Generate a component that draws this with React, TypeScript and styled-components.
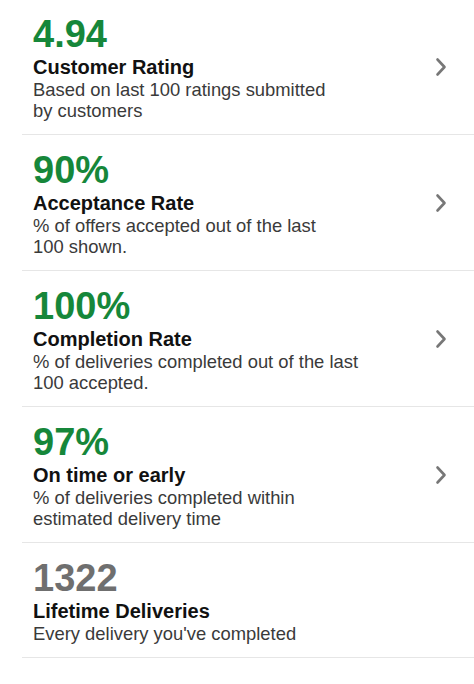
import { FC } from 'react';
import styled, { createGlobalStyle } from 'styled-components';

const GlobalStyle = createGlobalStyle`
  body {
    margin: 0;
    background: #ffffff;
    font-family: 'Liberation Sans', Arial, sans-serif;
  }
`;

const List = styled.div`
  padding-left: 22px;
`;

const Item = styled.div`
  display: flex;
  flex-direction: column;
  padding: 16px 27px 13px 11px;
  border-bottom: 1px solid #e6e6e6;

  &:first-child {
    padding-top: 15px;
  }
`;

const Value = styled.div<{ $muted?: boolean }>`
  font-size: 38px;
  font-weight: 700;
  line-height: 38px;
  color: ${({ $muted }) => ($muted ? '#6f6f6f' : '#16873a')};
`;

const Header = styled.div`
  display: flex;
  align-items: center;
  justify-content: space-between;
  margin-top: 2px;
  height: 24px;
`;

const Title = styled.div`
  font-size: 20px;
  font-weight: 700;
  line-height: 24px;
  color: #111111;
`;

const Description = styled.div`
  font-size: 18.4px;
  line-height: 21px;
  color: #3a3a3a;
  white-space: pre-line;
`;

const Chevron = () => (
  <svg width="12" height="20" viewBox="0 0 12 20" fill="none">
    <path d="M2.5 2.5 L9.5 10 L2.5 17.5" stroke="#777777" strokeWidth="2.6" strokeLinecap="round" strokeLinejoin="round" />
  </svg>
);

interface Stat {
  value: string;
  title: string;
  description: string;
  muted?: boolean;
  link?: boolean;
}

const stats: Stat[] = [
  {
    value: '4.94',
    title: 'Customer Rating',
    description: 'Based on last 100 ratings submitted\nby customers',
    link: true,
  },
  {
    value: '90%',
    title: 'Acceptance Rate',
    description: '% of offers accepted out of the last\n100 shown.',
    link: true,
  },
  {
    value: '100%',
    title: 'Completion Rate',
    description: '% of deliveries completed out of the last\n100 accepted.',
    link: true,
  },
  {
    value: '97%',
    title: 'On time or early',
    description: '% of deliveries completed within\nestimated delivery time',
    link: true,
  },
  {
    value: '1322',
    title: 'Lifetime Deliveries',
    description: "Every delivery you've completed",
    muted: true,
  },
];

const App: FC = () => {
  return (
    <>
      <GlobalStyle />
      <List>
        {stats.map((stat) => (
          <Item key={stat.title}>
            <Value $muted={stat.muted}>{stat.value}</Value>
            <Header>
              <Title>{stat.title}</Title>
              {stat.link && <Chevron />}
            </Header>
            <Description>{stat.description}</Description>
          </Item>
        ))}
      </List>
    </>
  );
};

export default App;
